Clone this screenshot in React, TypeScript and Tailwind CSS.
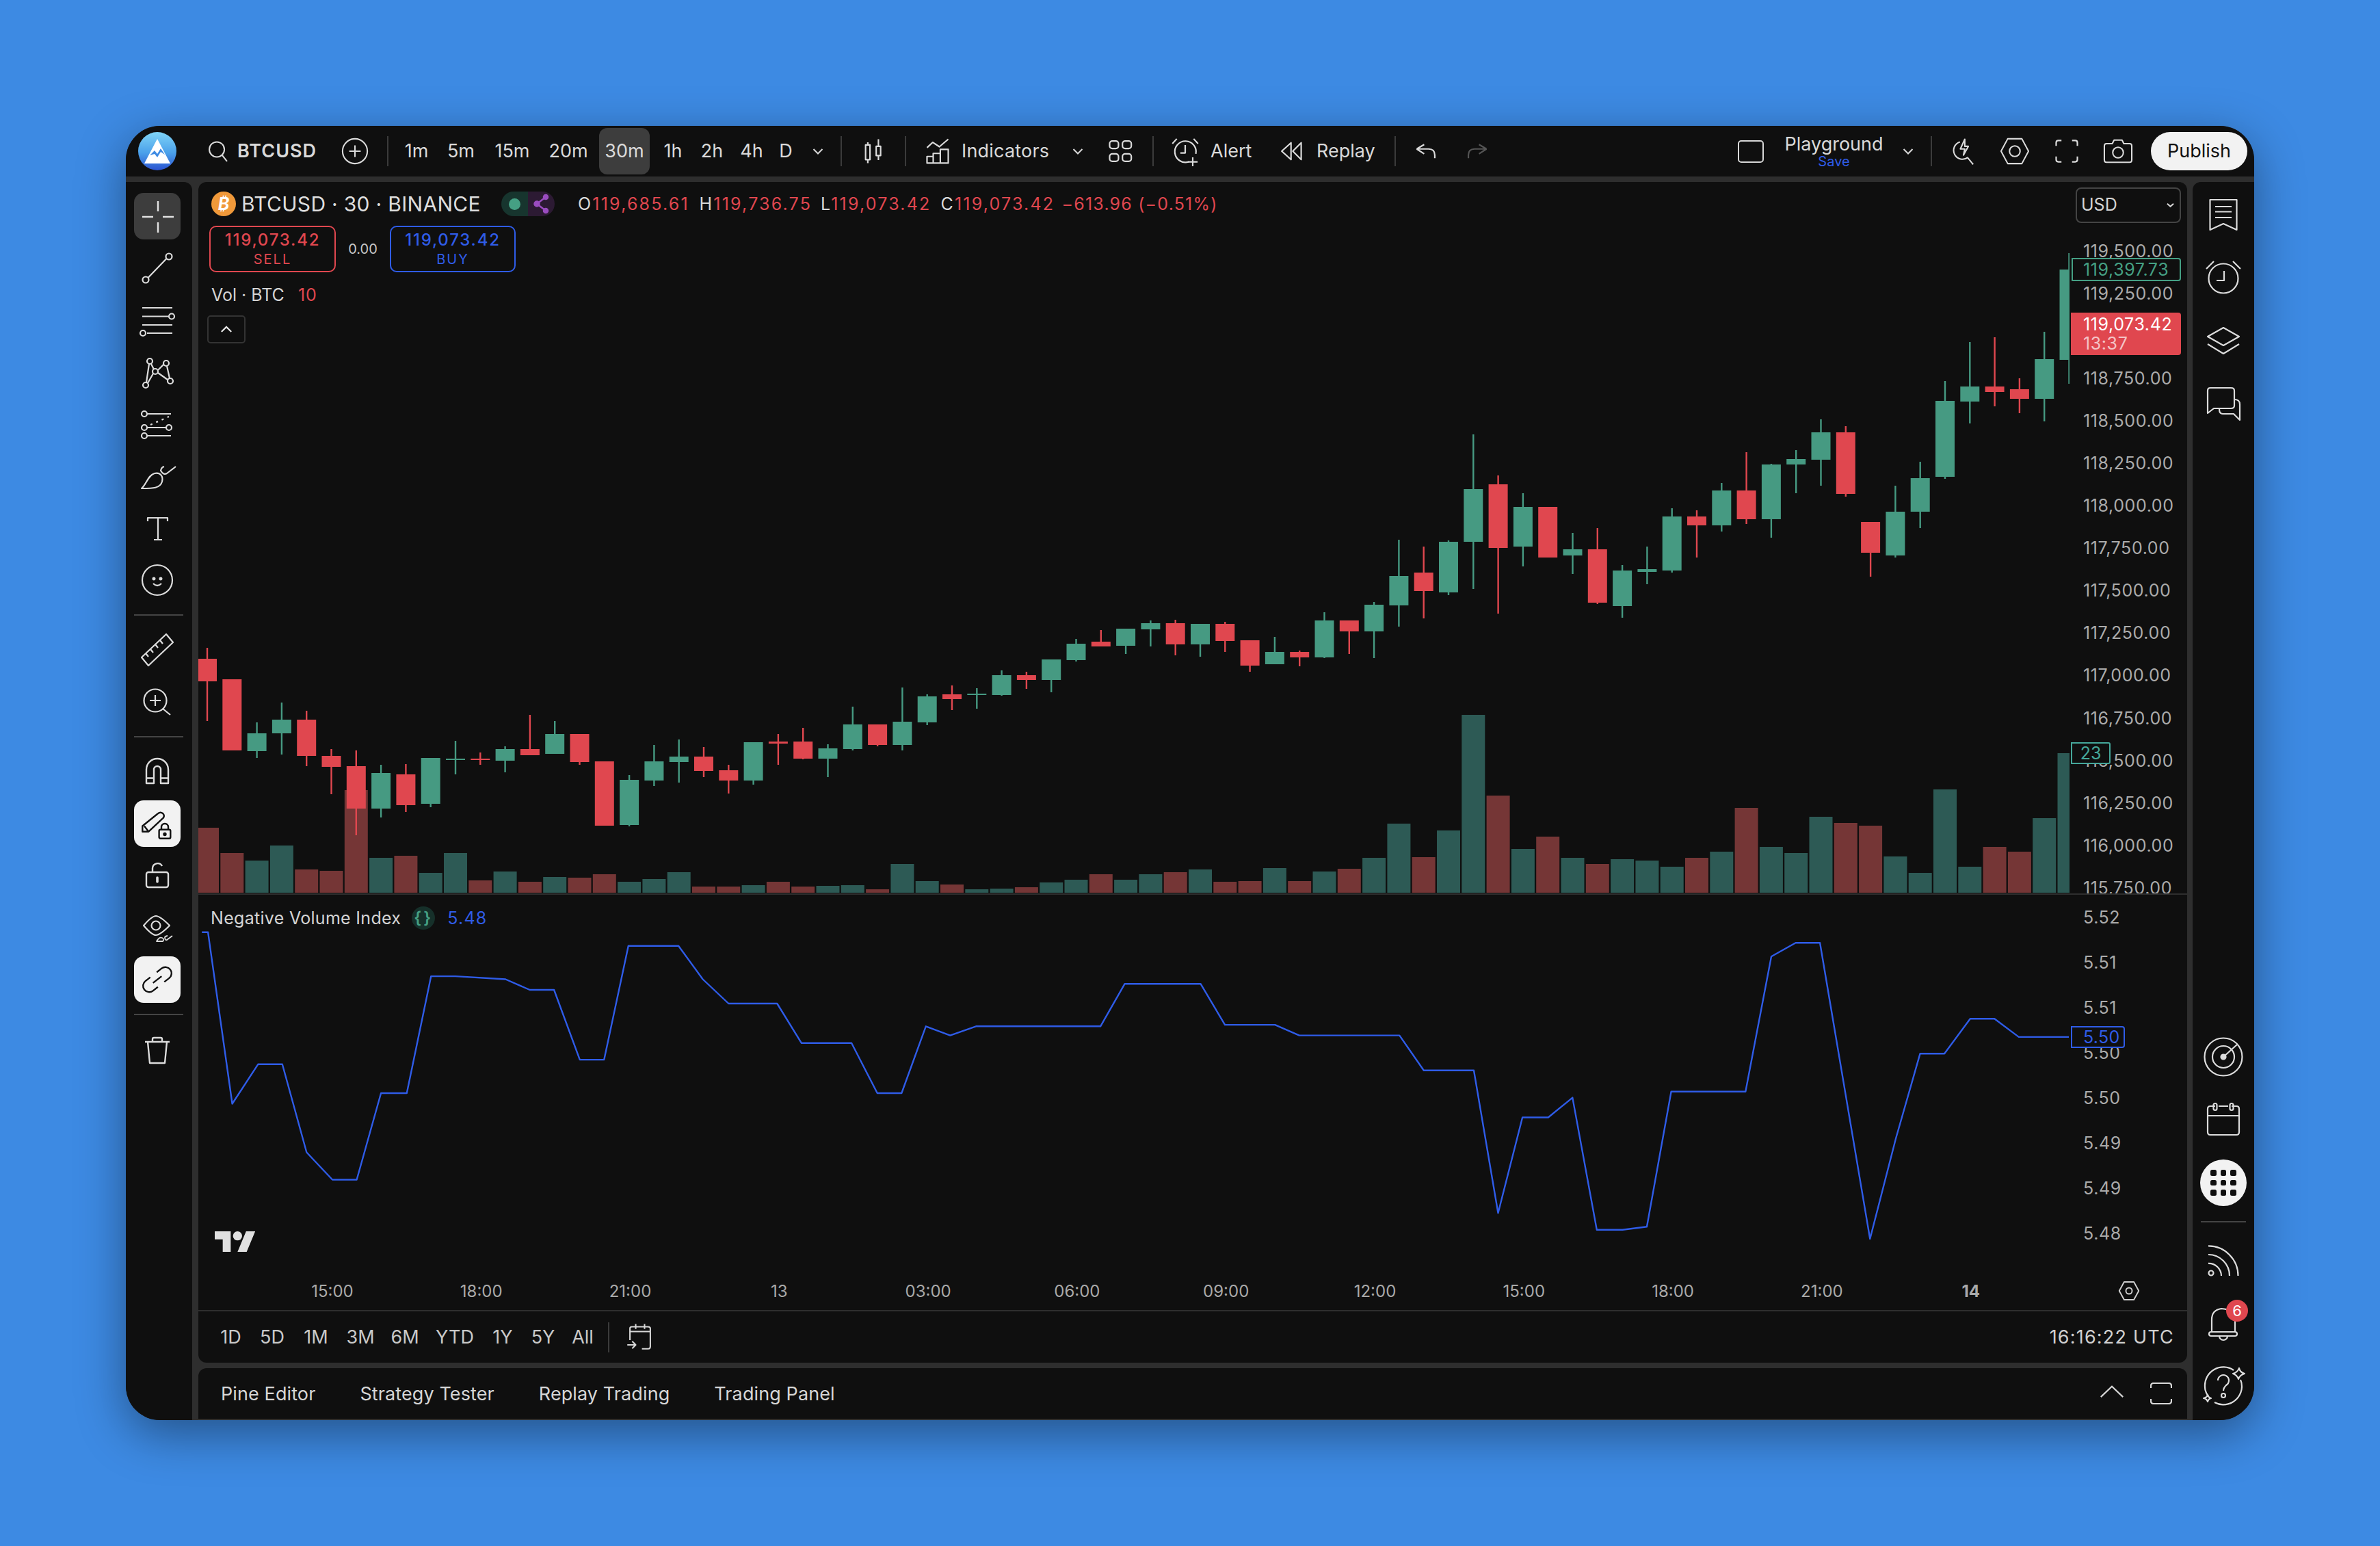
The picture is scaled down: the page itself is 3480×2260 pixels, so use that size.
import React from "react";

const C: number[][] = [
[963,996,947,1054,0,1210],[993,1097,993,1097,0,1247],[1072,1098,1056,1108,1,1258],[1052,1072,1027,1103,1,1236],[1052,1105,1039,1120,0,1271],[1105,1121,1095,1161,0,1273],[1120,1182,1097,1221,0,1155],[1130,1182,1118,1195,1,1254],[1132,1177,1117,1187,0,1251],[1108,1175,1108,1180,1,1276],[1109,1111,1083,1132,1,1247],[1109,1111,1100,1118,0,1287],[1095,1112,1091,1129,1,1274],[1095,1104,1045,1104,0,1289],[1073,1102,1054,1102,1,1282],[1073,1114,1073,1118,0,1283],[1113,1207,1113,1207,0,1278],[1140,1206,1133,1208,1,1289],[1113,1141,1089,1149,1,1285],[1106,1114,1081,1144,1,1275],[1106,1127,1092,1136,0,1296],[1126,1141,1118,1160,0,1296],
[1085,1141,1085,1147,1,1294],[1084,1087,1073,1118,0,1289],[1084,1109,1064,1110,0,1296],[1094,1109,1088,1136,1,1295],[1059,1095,1033,1097,1,1294],[1059,1089,1059,1091,0,1300],[1055,1089,1005,1097,1,1263],[1018,1056,1015,1060,1,1288],[1015,1022,1002,1038,0,1293],[1014,1016,1006,1036,1,1300],[987,1016,980,1017,1,1299],[987,994,982,1007,0,1297],[964,994,964,1012,1,1290],[941,965,934,967,1,1286],[938,945,921,945,0,1278],[919,944,919,956,1,1286],[911,920,907,945,1,1278],[911,942,906,958,0,1275],[912,942,912,960,1,1271],[912,937,909,953,0,1289],[936,973,936,982,0,1288],[953,971,931,971,1,1269],[953,961,951,974,0,1288],[907,961,895,962,1,1274],[907,923,907,956,0,1270],[884,923,880,962,1,1254],[842,885,789,916,1,1204],[837,864,799,904,0,1253],
[792,866,790,870,1,1214],[715,792,635,861,1,1045],[708,801,695,897,0,1163],[741,799,721,828,1,1241],[741,815,741,815,0,1223],[803,812,779,839,1,1254],[803,881,772,883,0,1263],[834,886,826,903,1,1256],[832,836,799,854,1,1258],[755,834,743,837,1,1267],[755,768,746,815,0,1254],[717,768,706,777,1,1245],[717,759,661,766,0,1181],[679,759,678,786,1,1238],[671,679,658,721,1,1247],[632,672,613,710,1,1194],[632,722,623,726,0,1203],[763,808,763,843,0,1207],[748,812,710,815,1,1252],[699,748,675,772,1,1276],[586,697,557,700,1,1154],[565,587,500,619,1,1267],[565,573,493,594,0,1238],[569,583,553,604,0,1245],[525,583,485,616,1,1196],[394,526,370,561,1,1101],
];

const NVI = [[133,614],[137,614],[153,727],[170,701],[186,701],[202,759],[219,777],[235,777],[251,720],[268,720],[284,643],[300,643],[333,645],[349,652],[365,652],[382,698],[398,698],[414,623],[447,623],[463,645],[480,661],[512,661],[528,687],[561,687],[578,720],[594,720],[610,676],[626,682],[643,676],[725,676],[741,648],[791,648],[807,675],[840,675],[856,682],[922,682],[938,705],[971,705],[987,799],[1003,736],[1020,736],[1036,723],[1052,810],[1069,810],[1085,808],[1101,719],[1150,719],[1167,630],[1183,621],[1199,621],[1232,816],[1249,750],[1265,694],[1281,694],[1298,671],[1314,671],[1330,683],[1363,683]];

const PRICES = ["119,500.00","119,250.00","","118,750.00","118,500.00","118,250.00","118,000.00","117,750.00","117,500.00","117,250.00","117,000.00","116,750.00","116,500.00","116,250.00","116,000.00","115,750.00"];
const IND = ["5.52","5.51","5.51","5.50","5.50","5.49","5.49","5.48"];
const TIMES = ["15:00","18:00","21:00","13","03:00","06:00","09:00","12:00","15:00","18:00","21:00","14"];

function Ic({ children, cls = "", sw = 2.2 }: { children: React.ReactNode; cls?: string; sw?: number }) {
  return (
    <svg viewBox="-34 -34 68 68" className={"block " + cls} fill="none" stroke="currentColor" strokeWidth={sw} strokeLinecap="butt" strokeLinejoin="round">
      {children}
    </svg>
  );
}

function Tool({ active, children }: { active?: "dark" | "light"; children: React.ReactNode }) {
  const bg = active === "dark" ? "bg-[#3d3d3d] text-[#e2e2e2]" : active === "light" ? "bg-[#f2f2f2] text-[#111111]" : "text-[#dcdcdc]";
  return <div className={"w-[68px] h-[68px] rounded-[14px] " + bg}><Ic cls="w-[68px] h-[68px]">{children}</Ic></div>;
}

function Chev() {
  return (
    <svg viewBox="-10 -10 20 20" className="w-[20px] h-[20px] block" fill="none" stroke="currentColor" strokeWidth={2}>
      <path d="M-6.5 -3 L0 3.5 L6.5 -3" />
    </svg>
  );
}

function TopSep() { return <div className="w-[2px] h-[44px] bg-[#3b3b3b] shrink-0" />; }
function Box({ children, cls = "" }: { children: React.ReactNode; cls?: string }) {
  return <div className={"w-[44px] h-[44px] shrink-0 " + cls}><Ic cls="w-[44px] h-[44px]">{children}</Ic></div>;
}
function Sep() { return <div className="w-[72px] h-[2px] bg-[#444444] my-[16px]" />; }

export default function App() {
  return (
    <div className="w-[3480px] h-[2260px] bg-[#3d8ae3] flex items-center justify-center font-['Inter','Liberation_Sans',sans-serif]">
      <div className="w-[3112px] h-[1892px] rounded-[50px] overflow-hidden bg-[#2e2e2e] flex flex-col shadow-[0_20px_70px_rgba(0,0,0,0.4)]">
        {/* top bar */}
        <div className="h-[74px] shrink-0 bg-[#0f0f0f] flex items-center pl-[18px] pr-[10px] text-[27px] text-[#dadada] whitespace-nowrap">
          <svg viewBox="0 0 56 56" className="w-[56px] h-[56px] shrink-0">
            <defs>
              <linearGradient id="lg" x1="0" y1="0" x2="0" y2="1">
                <stop offset="0" stopColor="#7fd4f7" />
                <stop offset="0.55" stopColor="#4aa0ea" />
                <stop offset="1" stopColor="#2a52cf" />
              </linearGradient>
            </defs>
            <circle cx="28" cy="28" r="28" fill="url(#lg)" />
            <path d="M28 10 L47 46 H9 Z" fill="#ffffff" />
            <path d="M17 34 L24 27 L28 32 L33 24 L39 33 L33 29 L28 37 L24 32 Z" fill="#3d8ae3" />
          </svg>
          <Box cls="ml-[39px]">
            <circle cx="-3" cy="-4" r="17" strokeWidth="3.2" /><path d="M9 9 L20 23" strokeWidth="3.2" />
          </Box>
          <span className="ml-[6px] w-[114px] font-semibold tracking-[1px]">BTCUSD</span>
          <Box cls="ml-[36px]">
            <circle cx="0" cy="0" r="28" strokeWidth="3.2" /><path d="M-13 0H13M0 -13V13" strokeWidth="3.2" />
          </Box>
          <div className="ml-[25px]"><TopSep /></div>
          <div className="ml-[8px] w-[66px] text-center">1m</div>
          <div className="w-[64px] text-center">5m</div>
          <div className="w-[86px] text-center">15m</div>
          <div className="w-[78px] text-center">20m</div>
          <div className="ml-[6px] w-[74px] h-[68px] rounded-[12px] bg-[#3d3d3d] flex items-center justify-center">30m</div>
          <div className="w-[68px] text-center">1h</div>
          <div className="w-[46px] text-center">2h</div>
          <div className="w-[70px] text-center">4h</div>
          <div className="w-[30px] text-center">D</div>
          <div className="w-[64px] flex justify-center"><Chev /></div>
          <div className="ml-[1px]"><TopSep /></div>
          <Box cls="ml-[23px]">
            <path d="M-11 -14 V-20 M-11 19 V27 M-16 -14 H-6 V19 H-16 Z M13 -11 V-27 M13 10 V20 M8 -11 H18 V10 H8 Z" strokeWidth="3.4" />
          </Box>
          <div className="ml-[25px]"><TopSep /></div>
          <Box cls="ml-[24px]">
            <path d="M-24 -8 L-11 -20 L4 -10 L24 -27 M-24 27 V12 H-10 V27 Z M-10 27 V5 H6 V27 Z M6 27 V-4 H24 V27 Z M-24 27 H24" strokeWidth="3.4" />
          </Box>
          <span className="ml-[13px] w-[127px] tracking-[0.2px]">Indicators</span>
          <div className="ml-[33px]"><Chev /></div>
          <Box cls="ml-[30px]">
            <g strokeWidth="3.4"><rect x="-24" y="-23" width="20" height="17" rx="6" /><rect x="5" y="-23" width="20" height="17" rx="6" /><rect x="-24" y="6" width="20" height="17" rx="6" /><rect x="5" y="6" width="20" height="17" rx="6" /></g>
          </Box>
          <div className="ml-[25px]"><TopSep /></div>
          <Box cls="ml-[24px]">
            <g strokeWidth="3.4">
              <path d="M8 24 A24 24 0 1 1 24 6" />
              <path d="M0 -14 V4 H-11 M-29 -17 L-19 -28 M29 -17 L19 -28 M17 14 V34 M6 24 H28" />
            </g>
          </Box>
          <span className="ml-[15px] w-[59px]">Alert</span>
          <Box cls="ml-[38px]">
            <path d="M-2 -19 L-23 0 L-2 19 Z M21 -19 L2 0 L21 19 Z" strokeWidth="3.4" />
          </Box>
          <span className="ml-[14px] w-[84px]">Replay</span>
          <div className="ml-[30px]"><TopSep /></div>
          <Box cls="ml-[22px]">
            <path d="M-21 -5 L-4 -15 M-21 -5 L-4 6 M-21 -5 H6 Q20 -5 20 9 V16" strokeWidth="3.4" />
          </Box>
          <Box cls="ml-[31px] text-[#555555]">
            <path d="M21 -5 L4 -15 M21 -5 L4 6 M21 -5 H-6 Q-20 -5 -20 9 V16" strokeWidth="3.4" />
          </Box>
          <div className="ml-auto w-[38px] h-[33px] rounded-[5px] border-2 border-[#d8d8d8] shrink-0" />
          <div className="ml-[31px] w-[143px] flex flex-col items-center leading-none">
            <span className="text-[27px] leading-[30px]">Playground</span>
            <span className="text-[20px] leading-[20px] text-[#2f5ce8]">Save</span>
          </div>
          <div className="ml-[27px]"><Chev /></div>
          <div className="ml-[23px]"><TopSep /></div>
          <Box cls="ml-[22px]">
            <g strokeWidth="3.2">
              <path d="M-5 -21 A20 20 0 1 0 13 14" />
              <path d="M6 -27 L-4 -5 H6 L3 9 L14 -11 H6 Z M12 14 L25 30" />
            </g>
          </Box>
          <Box cls="ml-[33px]">
            <path d="M-16 -28 H16 L31 0 L16 28 H-16 L-31 0 Z" strokeWidth="3.2" /><circle r="12" strokeWidth="3.2" />
          </Box>
          <Box cls="ml-[32px]">
            <path d="M-12 -24 H-19 Q-24 -24 -24 -19 V-12 M12 -24 H19 Q24 -24 24 -19 V-12 M-12 24 H-19 Q-24 24 -24 19 V12 M12 24 H19 Q24 24 24 19 V12" strokeWidth="3.4" />
          </Box>
          <Box cls="ml-[31px]">
            <path d="M-26 -17 H-13 L-9 -25 H9 L13 -17 H26 Q31 -17 31 -12 V20 Q31 25 26 25 H-26 Q-31 25 -31 20 V-12 Q-31 -17 -26 -17 Z" strokeWidth="3.2" /><circle cy="3" r="12" strokeWidth="3.2" />
          </Box>
          <div className="ml-[26px] w-[141px] h-[56px] rounded-full bg-[#f2f2f2] text-[#111111] flex items-center justify-center shrink-0">Publish</div>
        </div>

        {/* body */}
        <div className="flex-1 min-h-0 mt-[8px] flex">
          {/* left tools */}
          <div className="w-[97px] shrink-0 rounded-tr-[12px] bg-[#0f0f0f] pt-[16px] pl-[12px] flex flex-col">
            <div className="flex flex-col gap-[8px]">
              <Tool active="dark"><path d="M1 -22 V-7 M1 9 V24 M-22 1 H-6 M8 1 H24" strokeWidth="2.4" /></Tool>
              <Tool><circle cx="17" cy="-17" r="4.5" /><circle cx="-17" cy="17" r="4.5" /><path d="M13.5 -14 L-13.5 14" /></Tool>
              <Tool>
                <path d="M-22 -18 H22 M-22 -5.5 H17 M-22 7 H22 M-15 19 H22" />
                <circle cx="21" cy="-5.5" r="4" /><circle cx="-21" cy="19" r="4" />
              </Tool>
              <Tool>
                <circle cx="-11" cy="-16" r="4" /><circle cx="13" cy="-13" r="4" /><circle cx="-3" cy="-1" r="4" /><circle cx="-17" cy="19" r="4" /><circle cx="19" cy="13" r="4" />
                <path d="M-12 -12 L-16 15 M-9 -12 L-5 -4 M9 -11 L1 -3 M-6 2 L-14 16 M1 1 L15 11 M14 -9 L18 9" />
              </Tool>
              <Tool>
                <circle cx="-19" cy="-15" r="4" /><circle cx="-19" cy="5" r="4" /><circle cx="17" cy="5" r="4" /><circle cx="-19" cy="17" r="4" />
                <path d="M-15 -15 H20 M-15 5 H13 M-15 17 H20" />
                <path d="M-10 1 L17 -11" strokeDasharray="3 6" />
              </Tool>
              <Tool>
                <path d="M-23 18 C-16 12 -13 -2 -4 -4 C4 -6 9 0 7 8 C4 18 -6 18 -23 18 Z" />
                <path d="M27 -14 L14 -4 Q9 -1 5 -8 Q6 -13 10 -14" />
              </Tool>
              <Tool><path d="M-14 -10 V-15 H15 V-10 M1 -15 V17 M-5 17 H7" /></Tool>
              <Tool>
                <circle r="22" />
                <circle cx="-5" cy="-2" r="1.4" fill="currentColor" /><circle cx="5" cy="-2" r="1.4" fill="currentColor" />
                <path d="M-6 5 Q0 11 6 5" />
              </Tool>
            </div>
            <Sep />
            <div className="flex flex-col gap-[8px]">
              <Tool><path d="M-23 11 L13 -23 L23 -11 L-13 23 Z M-17 5 L-13 10 M-10 -1 L-6 4 M-3 -8 L1 -3 M4 -14 L8 -9" /></Tool>
              <Tool><circle cx="-3" cy="-2" r="16.5" /><path d="M8 10 L19 19 M-11 -2 H5 M-3 -10 V6" /></Tool>
            </div>
            <Sep />
            <div className="flex flex-col gap-[8px]">
              <Tool><path d="M-16 17 V-3 A16 16 0 0 1 16 -3 V17 H5 V-3 A5 5 0 0 0 -5 -3 V17 Z M-16 9.5 H-5 M5 9.5 H16" strokeWidth="2.4" /></Tool>
              <Tool active="light">
                <path d="M-21.7 3.5 L0 -14 Q4 -18 8 -15 Q11 -12 9 -8.7 L-12.7 11.7 H-21.7 Z M-19 3.5 L-12.7 11.7" strokeWidth="2.4" />
                <rect x="2.6" y="8.7" width="16.7" height="13" rx="2" strokeWidth="2.4" />
                <path d="M6 8.7 V5 A5 5 0 0 1 16 5 V8.7" strokeWidth="2.4" />
                <circle cx="11" cy="15.5" r="1.6" fill="currentColor" />
              </Tool>
              <Tool>
                <rect x="-16" y="-5" width="32" height="22" rx="3" strokeWidth="2.4" />
                <path d="M-7 -5 V-11 A7.5 7.5 0 0 1 7 -14" strokeWidth="2.4" />
                <path d="M0 3 V9" strokeWidth="3.6" strokeLinecap="round" />
              </Tool>
              <Tool>
                <path d="M-20 -3 Q-8 -17 -2 -17 Q4 -17 18 -3 Q4 11 -2 11 Q-8 11 -20 -3 Z" />
                <circle cx="-2" cy="-3" r="6.5" />
                <path d="M-1 20 Q3 13 7 15 Q11 17 8 20 Z M22 12 L14 18 Q11 19 11 14 Q13 12 15 12" strokeWidth="1.8" />
              </Tool>
              <Tool active="light">
                <g transform="rotate(-38)" strokeWidth="2.4">
                  <path d="M-6 -9 H-15 A9 9 0 0 0 -15 9 H-6 M6 -9 H15 A9 9 0 0 1 15 9 H6 M-8 0 H8" />
                </g>
              </Tool>
            </div>
            <Sep />
            <Tool><path d="M-18 -11 H18 M-14 -11 L-11 20 H11 L14 -11 M-7 -11 V-15 Q-7 -17 -5 -17 H5 Q7 -17 7 -15 V-11" strokeWidth="2.4" /></Tool>
          </div>

          {/* centre */}
          <div className="ml-[9px] w-[2908px] shrink-0 flex flex-col mb-[2px]">
            <div className="h-[1726px] shrink-0 rounded-b-[12px] rounded-t-[12px] bg-[#0f0f0f] flex flex-col overflow-hidden">
              {/* main pane */}
              <div className="h-[1040px] shrink-0 flex relative">
                <svg viewBox="290 266 2736 1040" className="w-[2736px] h-[1040px] shrink-0 block">
                  {C.map((c, i) => {
                    const x = 303 + 36.3 * i;
                    return <rect key={"v" + i} x={x - 17} y={c[5]} width={34} height={1305 - c[5]} fill={c[4] ? "#2d5a55" : "#753636"} />;
                  })}
                  {C.map((c, i) => {
                    const x = 303 + 36.3 * i;
                    const f = c[4] ? "#469a82" : "#e0474f";
                    return (
                      <g key={"c" + i} fill={f}>
                        <rect x={x - 1.2} y={c[2]} width={2.4} height={c[3] - c[2]} />
                        <rect x={x - 14} y={c[0]} width={28} height={c[1] - c[0]} />
                      </g>
                    );
                  })}
                </svg>
                <div className="w-[172px] shrink-0 h-[1040px] overflow-hidden pt-[70px] pl-[20px]">
                  {PRICES.map((p, i) => (
                    <div key={i} className="h-[62.1px] flex items-center text-[25px] tracking-[0.6px] text-[#ababab] leading-none">{p}</div>
                  ))}
                </div>

                {/* legend */}
                <div className="absolute left-[19px] top-[14px] flex items-center h-[36px] whitespace-nowrap">
                  <div className="w-[36px] h-[36px] rounded-full bg-[#f0993a] text-white flex items-center justify-center text-[25px] font-bold italic leading-none">₿</div>
                  <span className="ml-[8px] w-[348px] text-[30px] tracking-[0.3px] text-[#dedede] leading-none">BTCUSD · 30 · BINANCE</span>
                  <div className="ml-[32px] w-[78px] h-[36px] rounded-full overflow-hidden flex">
                    <div className="w-[39px] bg-[#17352e] flex items-center justify-center"><div className="w-[17px] h-[17px] rounded-full bg-[#45a084]" /></div>
                    <div className="w-[39px] bg-[#2c1a33] flex items-center justify-center">
                      <svg viewBox="0 0 24 30" className="w-[24px] h-[30px]" fill="#9a4cc0" stroke="#9a4cc0" strokeWidth="2.5">
                        <circle cx="18" cy="5" r="3" /><circle cx="5" cy="15" r="3.5" /><circle cx="18" cy="25" r="3" /><path d="M18 5 L5 15 L18 25" fill="none" />
                      </svg>
                    </div>
                  </div>
                  <div className="ml-[34px] text-[25px] tracking-[2.2px] leading-none flex text-[#e0474f]">
                    <span className="w-[177.500px]"><span className="text-[#dadada]">O</span>119,685.61</span>
                    <span className="w-[177.500px]"><span className="text-[#dadada]">H</span>119,736.75</span>
                    <span className="w-[175.500px]"><span className="text-[#dadada]">L</span>119,073.42</span>
                    <span className="w-[177px]"><span className="text-[#dadada]">C</span>119,073.42</span>
                    <span className="tracking-[1.2px]">−613.96 (−0.51%)</span>
                  </div>
                </div>

                <div className="absolute left-[16px] top-[64px] flex items-center whitespace-nowrap">
                  <div className="w-[185px] h-[68px] rounded-[10px] border-2 border-[#e0474f] text-[#e0474f] flex flex-col items-center justify-center leading-none">
                    <span className="text-[24px] font-medium tracking-[1.8px] mb-[6px]">119,073.42</span>
                    <span className="text-[20px] tracking-[2px]">SELL</span>
                  </div>
                  <span className="w-[79px] text-center text-[20px] text-[#c8c8c8]">0.00</span>
                  <div className="w-[184px] h-[68px] rounded-[10px] border-2 border-[#2f5ce8] text-[#2f5ce8] flex flex-col items-center justify-center leading-none">
                    <span className="text-[24px] font-medium tracking-[1.8px] mb-[6px]">119,073.42</span>
                    <span className="text-[20px] tracking-[2px]">BUY</span>
                  </div>
                </div>

                <div className="absolute left-[19px] top-[150px] text-[25px] leading-[30px] text-[#d4d4d4] whitespace-nowrap">
                  Vol · BTC<span className="ml-[20px] tracking-[1px] text-[#e0474f]">10</span>
                </div>
                <div className="absolute left-[13px] top-[195px] w-[56px] h-[41px] rounded-[5px] border-2 border-[#333333] text-[#e6e6e6] flex items-center justify-center">
                  <svg viewBox="0 0 20 12" className="w-[18px] h-[11px]" fill="none" stroke="currentColor" strokeWidth="2.4"><path d="M2 10 L10 2 L18 10" /></svg>
                </div>

                {/* USD select */}
                <div className="absolute left-[2745px] top-[8px] w-[154px] h-[52px] rounded-[8px] border-2 border-[#444444] flex items-center justify-between pl-[6px] pr-[8px] text-[25px] text-[#d4d4d4]">
                  <span>USD</span>
                  <svg viewBox="0 0 12 8" className="w-[11px] h-[8px]" fill="none" stroke="currentColor" strokeWidth="2.2"><path d="M1 1.5 L6 6 L11 1.5" /></svg>
                </div>

                {/* price tags */}
                <div className="absolute left-[2739px] top-[111px] w-[160px] h-[34px] rounded-r-[4px] border-2 border-[#45a084] bg-[#0f0f0f] pl-[15px] flex items-center text-[25px] tracking-[0.6px] text-[#45a084] leading-none">119,397.73</div>
                <div className="absolute left-[2738px] top-[191px] w-[161px] h-[62px] rounded-r-[4px] bg-[#e0474f] pl-[18px] flex flex-col justify-center text-[25px] tracking-[0.6px] leading-[28px]">
                  <span className="text-white">119,073.42</span>
                  <span className="text-[#f4c4c7]">13:37</span>
                </div>
                <div className="absolute left-[2738px] top-[819px] w-[58px] h-[32px] rounded-r-[3px] border-2 border-[#45a79a] bg-[#0f0f0f] flex items-center justify-center text-[25px] text-[#45a79a] leading-none">23</div>
              </div>

              <div className="h-[2px] shrink-0 bg-[#2e2e2e]" />

              {/* indicator pane */}
              <div className="h-[552px] shrink-0 flex relative">
                <svg viewBox="290 1308 2736 552" className="w-[2736px] h-[552px] shrink-0 block">
                  <polyline
                    fill="none"
                    stroke="#2f5ce8"
                    strokeWidth="2.4"
                    strokeLinejoin="round"
                    points={NVI.map((p) => `${(p[0] * 2.2194).toFixed(1)},${(p[1] * 2.2194).toFixed(1)}`).join(" ")}
                  />
                </svg>
                <div className="w-[172px] shrink-0 pl-[20px]">
                  {IND.map((p, i) => (
                    <div key={i} className="h-[66px] flex items-center text-[25px] tracking-[0.6px] text-[#ababab] leading-none">{p}</div>
                  ))}
                </div>
                <div className="absolute left-[18px] top-[17px] flex items-center whitespace-nowrap text-[25px] leading-[30px] text-[#d4d4d4]">
                  <span className="tracking-[0.3px]">Negative Volume Index</span>
                  <div className="ml-[16px] w-[34px] h-[34px] rounded-full bg-[#16302a] flex items-center justify-center text-[#45a084] text-[24px] font-semibold tracking-[3px] leading-none">{"{}"}</div>
                  <span className="ml-[18px] text-[#2f5ce8] tracking-[1.2px]">5.48</span>
                </div>
                <svg viewBox="0 0 36 18" className="absolute left-[24px] top-[492px] w-[60px] h-[30px]" fill="#e0e0e0">
                  <path d="M14 18H7V7H0V0h14v18zM28 18h-8L27.500 0h8L28 18z" /><circle cx="20" cy="4" r="4" />
                </svg>
                <div className="absolute left-[2738px] top-[192px] w-[79px] h-[32px] rounded-r-[4px] border-2 border-[#2f5ce8] bg-[#0f0f0f] pl-[16px] flex items-center text-[25px] tracking-[0.3px] text-[#2f5ce8] leading-none">5.50</div>
              </div>

              {/* time axis */}
              <div className="h-[55px] shrink-0 flex items-center pl-[87px] relative">
                {TIMES.map((t, i) => (
                  <div key={i} className={"w-[217.8px] shrink-0 text-center text-[24px] leading-none text-[#a9a9a9] " + (t === "14" ? "font-bold" : "")}>{t}</div>
                ))}
                <div className="absolute left-[2801px] top-[5px] w-[44px] h-[44px] text-[#cfcfcf]">
                  <Ic cls="w-[44px] h-[44px]" sw={3}>
                    <path d="M-11 -20 H11 L22 0 L11 20 H-11 L-22 0 Z" /><circle r="7" />
                  </Ic>
                </div>
              </div>
              <div className="h-[2px] shrink-0 bg-[#2e2e2e]" />

              {/* range bar */}
              <div className="flex-1 flex items-center pl-[18px] pr-[19px] text-[27px] text-[#c9c9c9] leading-none">
                <div className="w-[59px] text-center">1D</div>
                <div className="w-[62px] text-center">5D</div>
                <div className="w-[66px] text-center">1M</div>
                <div className="w-[64px] text-center">3M</div>
                <div className="w-[66px] text-center">6M</div>
                <div className="w-[80px] text-center">YTD</div>
                <div className="w-[60px] text-center">1Y</div>
                <div className="w-[58px] text-center">5Y</div>
                <div className="w-[58px] text-center">All</div>
                <div className="ml-[8px] w-[2px] h-[44px] bg-[#3b3b3b]" />
                <Box cls="ml-[23px] text-[#d8d8d8]">
                  <path d="M-23 6 V-20 Q-23 -24 -19 -24 H18 Q23 -24 23 -20 V21 Q23 26 18 26 H4 M-23 -13 H23 M-10 -30 V-19 M10 -30 V-19 M-29 17 H-11 M-18 9 L-10 17 L-18 25" strokeWidth="3.2" />
                </Box>
                <span className="ml-auto tracking-[1.2px] text-[#d0d0d0]">16:16:22 UTC</span>
              </div>
            </div>

            {/* bottom panel */}
            <div className="mt-[8px] flex-1 rounded-t-[12px] bg-[#0f0f0f] flex items-center pl-[33px] pr-[22px] gap-[65px] text-[27px] tracking-[0.1px] text-[#d6d6d6] leading-none">
              <span>Pine Editor</span>
              <span>Strategy Tester</span>
              <span>Replay Trading</span>
              <span>Trading Panel</span>
              <div className="ml-auto flex items-center text-[#d8d8d8] gap-[38px]">
                <svg viewBox="0 0 40 22" className="w-[36px] h-[20px] mb-[6px]" fill="none" stroke="currentColor" strokeWidth="2.4"><path d="M2 20 L20 3 L38 20" /></svg>
                <svg viewBox="0 0 32 32" className="w-[32px] h-[32px]" fill="none" stroke="currentColor" strokeWidth="2.2"><path d="M1 8 V5 Q1 1 5 1 H27 Q31 1 31 5 V8 M1 24 V27 Q1 31 5 31 H27 Q31 31 31 27 V24" /></svg>
              </div>
            </div>
          </div>

          {/* right tools */}
          <div className="ml-[8px] flex-1 rounded-tl-[12px] bg-[#0f0f0f] pt-[14px] pb-[15px] pl-[11px] flex flex-col justify-between">
            <div className="flex flex-col gap-[24px]">
              <Tool><path d="M-19.500 -22 H19.500 V22 L0 13 L-19.500 22 Z M-12 -12 H12 M-12 -4.500 H12 M-12 4 H12" /></Tool>
              <Tool><circle cy="1" r="21.500" /><path d="M1 -10 V4 H-10 M-25 -13 L-14 -24 M25 -13 L14 -24" /></Tool>
              <Tool><path d="M0 -19 L23 -6 L0 7 L-23 -6 Z M-23 5 L0 19 L23 5" /></Tool>
              <Tool>
                <path d="M-23 14 V-19 Q-23 -23 -19 -23 H11 Q16 -23 16 -19 V3 Q16 7 11 7 H-14 Z" />
                <path d="M16 -6 Q24 -6 24 1 V24 L15 15 H-1 Q-6 15 -6 8" />
              </Tool>
            </div>
            <div className="flex flex-col">
              <div className="flex flex-col gap-[24px]">
                <Tool><circle r="27.500" /><circle r="16" /><circle r="3.500" fill="currentColor" /><path d="M0 0 L20 -18" /></Tool>
                <Tool>
                  <path d="M-12 -20 H-19 Q-23 -20 -23 -16 V18 Q-23 22 -19 22 H19 Q23 22 23 18 V-16 Q23 -20 19 -20 H12 M-7 -20 H7 M-23 -6 H23" />
                  <rect x="-14.500" y="-24" width="5" height="10" rx="2.500" /><rect x="9.500" y="-24" width="5" height="10" rx="2.500" />
                </Tool>
                <div className="w-[68px] h-[68px] rounded-full bg-[#f2f2f2] grid grid-cols-3 gap-[5.500px] p-[15px]">
                  {Array.from({ length: 9 }).map((_, i) => <div key={i} className="w-[8.500px] h-[8.500px] rounded-[2.500px] bg-[#0f0f0f]" />)}
                </div>
              </div>
              <div className="my-[22px] w-[66px] h-[2px] bg-[#444444] ml-[1px]" />
              <div className="flex flex-col gap-[24px]">
                <Tool>
                  <circle cx="-18" cy="18" r="3.500" />
                  <path d="M-22 -21.600 A43.500 43.500 0 0 1 21.500 22 M-22 -9 A31 31 0 0 1 9 22 M-22 3.800 A18.500 18.500 0 0 1 -3 22" />
                </Tool>
                <div className="w-[68px] h-[68px] relative">
                  <Tool>
                    <path d="M-17 12 V-6 Q-17 -20 -3 -22 Q10 -22 17 -10 V12" />
                    <rect x="-21" y="12" width="41" height="6" rx="3" />
                    <path d="M-6 18 A6 6 0 0 0 6 18" />
                  </Tool>
                  <div className="absolute left-[38px] top-[-1px] w-[32px] h-[32px] rounded-full bg-[#e0474f] text-white text-[22px] leading-none flex items-center justify-center">6</div>
                </div>
                <Tool>
                  <path d="M15 -24 A27 27 0 0 0 -27 0 Q-27 8 -22 14 M-13 23 A27 27 0 0 0 27 0 Q27 -6 25 -10" />
                  <path d="M-8 -9 A8 8 0 1 1 4 -2 Q0 2 0 6" />
                  <circle cy="13" r="3" />
                  <path d="M23 -27 Q24 -21 31 -19 Q24 -17 22 -11 Q20 -17 14 -19 Q21 -21 23 -27 Z" />
                  <path d="M-23 12 Q-22 16 -18 17 Q-22 18 -23 22 Q-24 18 -29 17 Q-24 16 -23 12 Z" />
                </Tool>
              </div>
            </div>
          </div>
        </div>
      </div>
    </div>
  );
}
